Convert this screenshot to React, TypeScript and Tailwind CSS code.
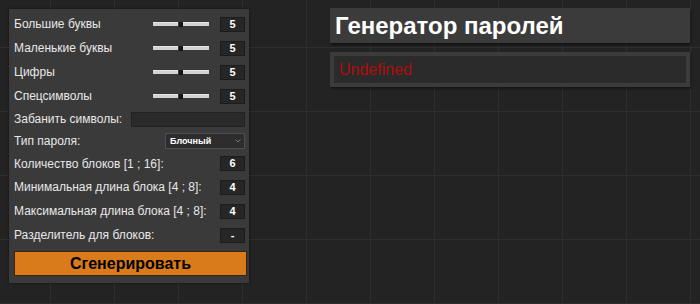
import React from "react";

function Slider() {
  return (
    <div className="flex items-center w-[56px] h-[6px] mr-[11px]">
      <div className="w-[25px] h-[4px] bg-[#d2d2d2] border-t border-[#e6e6e6]" />
      <div className="w-[5px] h-[6px] flex justify-center items-center">
        <div className="w-[4px] h-[5px] bg-[#151515]" />
      </div>
      <div className="w-[26px] h-[4px] bg-[#d2d2d2] border-t border-[#e6e6e6]" />
    </div>
  );
}

function NumBox({ v }: { v: string }) {
  return (
    <div className="w-[25px] h-[15px] bg-[#262626] border border-[#1c1c1c] flex items-center justify-center text-[11px] font-bold text-white leading-none">
      {v}
    </div>
  );
}

function Row({ label, h, children }: { label: string; h: string; children?: React.ReactNode }) {
  return (
    <div className={`flex items-center ${h}`}>
      <div className="flex-1 text-[12px] text-[#e8e8e8] whitespace-nowrap">{label}</div>
      {children}
    </div>
  );
}

export default function App() {
  return (
    <div className="w-[700px] h-[304px] bg-[#232323] bg-[linear-gradient(to_right,#2e2e2e_1px,transparent_1px),linear-gradient(to_bottom,#2e2e2e_1px,transparent_1px)] bg-[size:64px_64px] bg-[position:50px_47px] flex items-start font-['Liberation_Sans',Arial,sans-serif] overflow-hidden">
      <div className="ml-[9px] mt-[9px] w-[240px] h-[274px] bg-[#3a3a3a] shadow-[0_0_3px_rgba(0,0,0,0.5)] pl-[5px] pr-[4px] pt-[3px] flex flex-col">
        <Row label="Большие буквы" h="h-[24px]">
          <Slider />
          <NumBox v="5" />
        </Row>
        <Row label="Маленькие буквы" h="h-[24px]">
          <Slider />
          <NumBox v="5" />
        </Row>
        <Row label="Цифры" h="h-[24px]">
          <Slider />
          <NumBox v="5" />
        </Row>
        <Row label="Спецсимволы" h="h-[24px]">
          <Slider />
          <NumBox v="5" />
        </Row>
        <div className="flex items-center h-[22px]">
          <div className="text-[12px] text-[#e8e8e8] whitespace-nowrap mr-[9px]">Забанить символы:</div>
          <div className="flex-1 h-[15px] bg-[#2a2a2a] border border-[#222]" />
        </div>
        <Row label="Тип пароля:" h="h-[22px]">
          <div className="w-[80px] h-[16px] bg-[#2d2d2d] border border-[#4e4e4e] flex items-center pl-[4px] pr-[3px]">
            <span className="flex-1 text-[9px] font-bold text-white leading-none">Блочный</span>
            <svg width="6" height="4" viewBox="0 0 6 4" className="text-[#777]">
              <path d="M0.5 0.5 L3 3 L5.5 0.5" fill="none" stroke="currentColor" strokeWidth="1" />
            </svg>
          </div>
        </Row>
        <Row label="Количество блоков [1 ; 16]:" h="h-[23px]">
          <NumBox v="6" />
        </Row>
        <Row label="Минимальная длина блока [4 ; 8]:" h="h-[24px]">
          <NumBox v="4" />
        </Row>
        <Row label="Максимальная длина блока [4 ; 8]:" h="h-[24px]">
          <NumBox v="4" />
        </Row>
        <Row label="Разделитель для блоков:" h="h-[24px]">
          <NumBox v="-" />
        </Row>
        <button className="mt-[4px] w-[233px] h-[25px] bg-[#d97a1b] border border-[#3a2410] text-black font-bold text-[16px] flex items-center justify-center">
          Сгенерировать
        </button>
      </div>
      <div className="ml-[81px] mt-[8px] w-[360px] flex flex-col gap-[9px]">
        <div className="h-[35px] bg-[#3b3b3b] shadow-[1px_2px_2px_rgba(0,0,0,0.5)] flex items-center pl-[5px]">
          <span className="text-[24px] font-bold text-white leading-none">Генератор паролей</span>
        </div>
        <div className="h-[35px] bg-[#3b3b3b] p-[4px] shadow-[1px_2px_2px_rgba(0,0,0,0.4)]">
          <div className="h-full bg-[#2b2b2b] flex items-center pl-[5px]">
            <span className="text-[16px] text-[#b00d0d] leading-none">Undefined</span>
          </div>
        </div>
      </div>
    </div>
  );
}
